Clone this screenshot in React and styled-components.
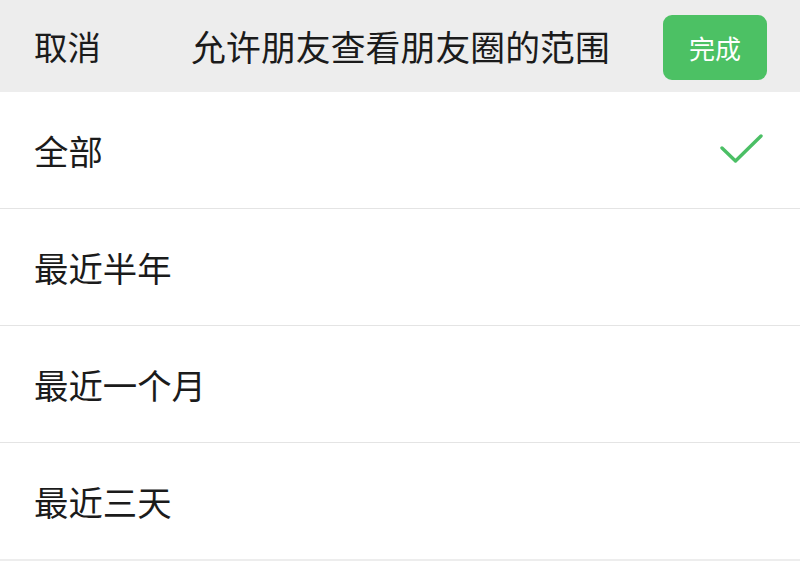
import React from 'react';
import styled, { createGlobalStyle } from 'styled-components';

const GlobalStyle = createGlobalStyle`
  html, body {
    margin: 0;
    padding: 0;
    background: #ededed;
  }
  body {
    font-family: "Noto Sans CJK SC", "Noto Sans", sans-serif;
    color: #1b1b1b;
  }
`;

const Page = styled.div`
  width: 800px;
  min-height: 561px;
  background: #ededed;
`;

const Header = styled.div`
  height: 92px;
  display: grid;
  grid-template-columns: 1fr auto 1fr;
  align-items: center;
  padding: 0 33px 0 34px;
  box-sizing: border-box;
  background: #ededed;
`;

const Cancel = styled.div`
  font-size: 33.4px;
  line-height: 1;
  justify-self: start;
`;

const Title = styled.div`
  font-size: 34.8px;
  line-height: 1;
  letter-spacing: 0.1px;
`;

const DoneButton = styled.button`
  justify-self: end;
  width: 104px;
  height: 65px;
  border: none;
  border-radius: 9px;
  background: #4cc164;
  color: #fff;
  font-family: inherit;
  font-size: 26px;
  padding: 0;
  margin-top: 2px;
`;

const List = styled.div`
  background: #fff;
`;

const Row = styled.div`
  height: 116px;
  display: flex;
  align-items: center;
  justify-content: space-between;
  padding: 0 36px 0 34px;
  box-sizing: content-box;
  border-bottom: ${p => (p.last ? 'none' : '1px solid #e4e4e4')};
  font-size: 34.4px;
  line-height: 1;
`;

const Check = () => (
  <svg width="44" height="34" viewBox="0 0 44 34">
    <path d="M2 15 L15.5 28 L41 3" fill="none" stroke="#4bbf65" strokeWidth="3.4" strokeLinecap="round" strokeLinejoin="round" />
  </svg>
);

const options = ['全部', '最近半年', '最近一个月', '最近三天'];

export default function App() {
  return (
    <Page>
      <GlobalStyle />
      <Header>
        <Cancel>取消</Cancel>
        <Title>允许朋友查看朋友圈的范围</Title>
        <DoneButton>完成</DoneButton>
      </Header>
      <List>
        {options.map((o, i) => (
          <Row key={o} last={i === options.length - 1}>
            <span>{o}</span>
            {i === 0 && <Check />}
          </Row>
        ))}
      </List>
    </Page>
  );
}
